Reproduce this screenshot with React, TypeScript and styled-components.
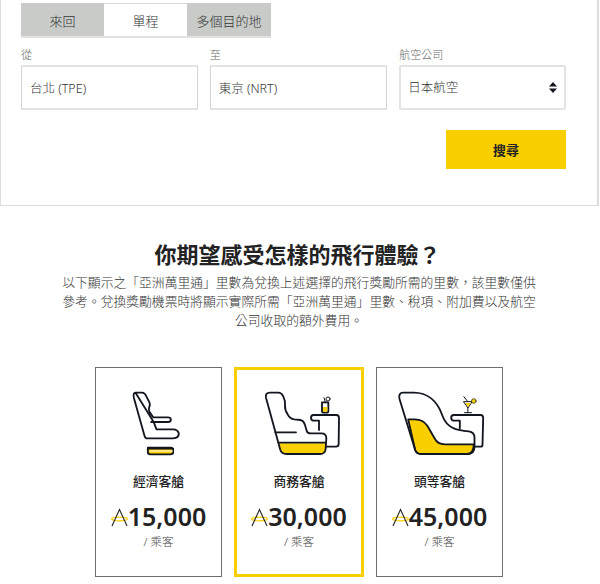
import styled, { createGlobalStyle } from "styled-components";

const GlobalStyle = createGlobalStyle`
  html, body {
    margin: 0;
    padding: 0;
    background: #fff;
    overflow: hidden;
    font-family: "Noto Sans", "Noto Sans CJK TC", sans-serif;
  }
`;

const Page = styled.div`
  width: 600px;
  height: 584px;
  overflow: hidden;
`;

const SearchPanel = styled.section`
  box-sizing: border-box;
  width: 599px;
  height: 206px;
  padding: 3px 31px 0 20px;
  background: #fff;
  border: 1px solid #dcdcdc;
  border-top: 0;
  border-right-width: 2px;
`;

const Tabs = styled.div`
  display: flex;
  width: 250px;
  height: 35px;
  border-bottom: 2px solid #e2e3e1;
  box-sizing: border-box;
  background: #c9cbc8;
`;

const Tab = styled.button<{ $active?: boolean; $width: number }>`
  width: ${(p) => p.$width}px;
  height: 33px;
  padding: 0;
  border: 0;
  border-top: 1px solid ${(p) => (p.$active ? "#d8d9d7" : "#c9cbc8")};
  background: ${(p) => (p.$active ? "#fff" : "#c9cbc8")};
  color: #333;
  font: 300 13px "Noto Sans", "Noto Sans CJK TC", sans-serif;
`;

const Fields = styled.div`
  display: flex;
  gap: 12px;
  margin-top: 9px;
`;

const Field = styled.label<{ $width: number }>`
  display: block;
  position: relative;
  width: ${(p) => p.$width}px;
`;

const FieldLabel = styled.div`
  height: 18px;
  color: #666;
  font-size: 11px;
  font-weight: 300;
  line-height: 16px;
`;

const TextInput = styled.input`
  box-sizing: border-box;
  display: block;
  width: 100%;
  height: 45px;
  padding: 0 8px;
  border: 1px solid #d4d4d4;
  border-top-width: 2px;
  border-bottom-width: 2px;
  border-top-color: #e3e3e3;
  border-bottom-color: #e3e3e3;
  border-radius: 1px;
  background: #fff;
  color: #333;
  font: 300 12.5px "Noto Sans", "Noto Sans CJK TC", sans-serif;
  outline: none;
`;

const SelectBox = styled.select`
  box-sizing: border-box;
  display: block;
  width: 100%;
  height: 45px;
  padding: 0 7px;
  appearance: none;
  border: 2px solid #e3e3e3;
  border-radius: 2px;
  background: #fff;
  color: #333;
  font: 300 12.5px "Noto Sans", "Noto Sans CJK TC", sans-serif;
  outline: none;
`;

const SelectArrows = styled.svg`
  position: absolute;
  right: 9px;
  top: 35px;
  pointer-events: none;
`;

const SearchRow = styled.div`
  display: flex;
  justify-content: flex-end;
  margin-top: 20px;
`;

const SearchButton = styled.button`
  width: 120px;
  height: 39px;
  border: 0;
  border-radius: 0;
  background: #f9cf00;
  color: #222;
  font: 600 13px "Noto Sans", "Noto Sans CJK TC", sans-serif;
`;

const Intro = styled.section`
  width: 480px;
  margin: 32px 0 0 59px;
  text-align: center;
  font-family: "Noto Sans CJK TC", sans-serif;
`;

const Heading = styled.h2`
  margin: 0;
  padding-right: 3px;
  color: #222;
  font-size: 22px;
  font-weight: 700;
  line-height: 30px;
`;

const Lead = styled.p`
  margin: 4px 0 0;
  color: #333;
  font-size: 12.8px;
  font-weight: 300;
  line-height: 19px;
`;

const Cards = styled.div`
  display: flex;
  gap: 12px;
  margin: 38px 0 0 95px;
`;

const Card = styled.div<{ $selected?: boolean }>`
  box-sizing: border-box;
  display: flex;
  flex-direction: column;
  align-items: center;
  width: ${(p) => (p.$selected ? "130px" : "127px")};
  height: 210px;
  padding-top: ${(p) => (p.$selected ? "20px" : "22px")};
  border: ${(p) => (p.$selected ? "3px solid #f9cf00" : "1px solid #6e6e6e")};
  background: #fff;
`;

const CabinName = styled.div`
  margin-top: 15px;
  color: #222;
  font-size: 12.8px;
  font-weight: 500;
  line-height: 20px;
`;

const Price = styled.div`
  display: flex;
  align-items: center;
  margin-top: 8px;
  color: #222;
  font-size: 25px;
  font-weight: 600;
  line-height: 34px;
`;

const PerPassenger = styled.div`
  margin-top: 1px;
  color: #444;
  font-size: 11.5px;
  font-weight: 300;
  line-height: 16px;
`;

const ink = "#12161f";
const gold = "#f9cf00";

const MilesMark = () => (
  <svg width="17" height="19" viewBox="0 0 17 19" fill="none" style={{ marginTop: 3 }}>
    <ellipse cx="8.5" cy="11" rx="7.8" ry="1.8" stroke={gold} strokeWidth="1.3" />
    <path d="M1 18 8.5 1.5 16 18" stroke="#222" strokeWidth="1.1" />
  </svg>
);

// all three seats are drawn in 3x coordinates, viewBox is centred on the card
const SeatIcon = styled.svg.attrs({
  width: 100,
  height: 66,
  fill: "none",
  stroke: ink,
  strokeWidth: 5.5,
  strokeLinejoin: "round",
  strokeLinecap: "round",
})`
  display: block;
  flex: none;
`;

const EconomySeat = () => (
  <SeatIcon viewBox="55.5 95 300 198">
    <path d="M172 268h68q8 0 8 8v5q0 7-8 7h-60q-8 0-8-7z" fill={gold} />
    <path d="M172 271h76" />
    <path d="M178 278h68" stroke="#fff" strokeWidth="3" />
    <path d="M135 103h20q8 0 13 12l9 18q3 6-1 14-3 8 2 15l10 15h44q9 0 9 7t-9 7h-50M190 192l8 21h50q13 0 17 12 0 15-17 15h-78q-6 0-8-8L130 118q-3-15 5-15z" />
  </SeatIcon>
);

const BusinessSeat = () => (
  <SeatIcon viewBox="57 95 300 198">
    <path d="M146 255h142l-2 20q-2 12-14 12H170q-14 0-18-10z" fill={gold} stroke="none" />
    <path d="M120 103h25q10 0 15 12 6 12 5 25-1 15 8 28 6 13 20 15l18 2q10 2 14 15l5 17q2 8 12 8h32q15 0 15 15l-2 32q-2 15-17 15H170q-15 0-19-12L108 118q-3-15 12-15z" />
    <path d="M136 222h62M146 253h142" />
    <path d="M290 265h28q8 0 8-8l1-78q0-9-8-9h-68q-8 0-8 8t8 9h16v28" />
    <path d="M276 132h19v26q0 5-5 5h-9q-5 0-5-5z" />
    <path d="M279 146h13v14h-13z" fill={gold} stroke="none" />
    <path d="M286 132l-4-14" strokeWidth="3" />
    <circle cx="294" cy="122" r="6" strokeWidth="3" />
  </SeatIcon>
);

const FirstSeat = () => (
  <SeatIcon viewBox="58.5 95 300 198">
    <path d="M113 183h20q25 0 38 20l22 38q8 17 30 17h87q-1 29-20 29H152q-14 0-18-12z" fill={gold} />
    <path d="M98 103h32c40 0 70 25 85 67q10 30 35 40 15 6 45 9 17 3 17 18v28q0 22-22 22H152q-14 0-18-12L87 122q-4-19 11-19z" />
    <path d="M312 265h18q6 0 6-6l2-80q0-9-8-9h-80q-8 0-8 8t8 9h18v23" />
    <path d="M280 130h25l-12 18zM292 148v15M282 163h21M280 115l12 15" strokeWidth="3" />
    <path d="M284 134h17l-8 12z" fill={gold} stroke="none" />
    <circle cx="310" cy="128" r="7" fill={gold} strokeWidth="2" />
  </SeatIcon>
);

const cabins = [
  { name: "經濟客艙", price: "15,000", Icon: EconomySeat },
  { name: "商務客艙", price: "30,000", Icon: BusinessSeat, selected: true },
  { name: "頭等客艙", price: "45,000", Icon: FirstSeat },
];

export default function App() {
  return (
    <Page lang="zh-TW">
      <GlobalStyle />
      <SearchPanel>
        <Tabs>
          <Tab $width={83}>來回</Tab>
          <Tab $width={83} $active>
            單程
          </Tab>
          <Tab $width={84}>多個目的地</Tab>
        </Tabs>
        <Fields>
          <Field $width={177}>
            <FieldLabel>從</FieldLabel>
            <TextInput readOnly value="台北 (TPE)" />
          </Field>
          <Field $width={178}>
            <FieldLabel>至</FieldLabel>
            <TextInput readOnly value="東京 (NRT)" />
          </Field>
          <Field $width={167}>
            <FieldLabel>航空公司</FieldLabel>
            <SelectBox defaultValue="jal">
              <option value="jal">日本航空</option>
            </SelectBox>
            <SelectArrows width="8" height="11" viewBox="0 0 8 11" fill={ink}>
              <path d="M4 0l4 4.5H0zM4 11L0 6.5h8z" />
            </SelectArrows>
          </Field>
        </Fields>
        <SearchRow>
          <SearchButton>搜尋</SearchButton>
        </SearchRow>
      </SearchPanel>
      <Intro>
        <Heading>你期望感受怎樣的飛行體驗？</Heading>
        <Lead>
          以下顯示之「亞洲萬里通」里數為兌換上述選擇的飛行獎勵所需的里數，該里數僅供參考。兌換獎勵機票時將顯示實際所需「亞洲萬里通」里數、稅項、附加費以及航空公司收取的額外費用。
        </Lead>
      </Intro>
      <Cards>
        {cabins.map(({ name, price, Icon, selected }) => (
          <Card key={name} $selected={selected}>
            <Icon />
            <CabinName>{name}</CabinName>
            <Price>
              <MilesMark />
              {price}
            </Price>
            <PerPassenger>/ 乘客</PerPassenger>
          </Card>
        ))}
      </Cards>
    </Page>
  );
}
